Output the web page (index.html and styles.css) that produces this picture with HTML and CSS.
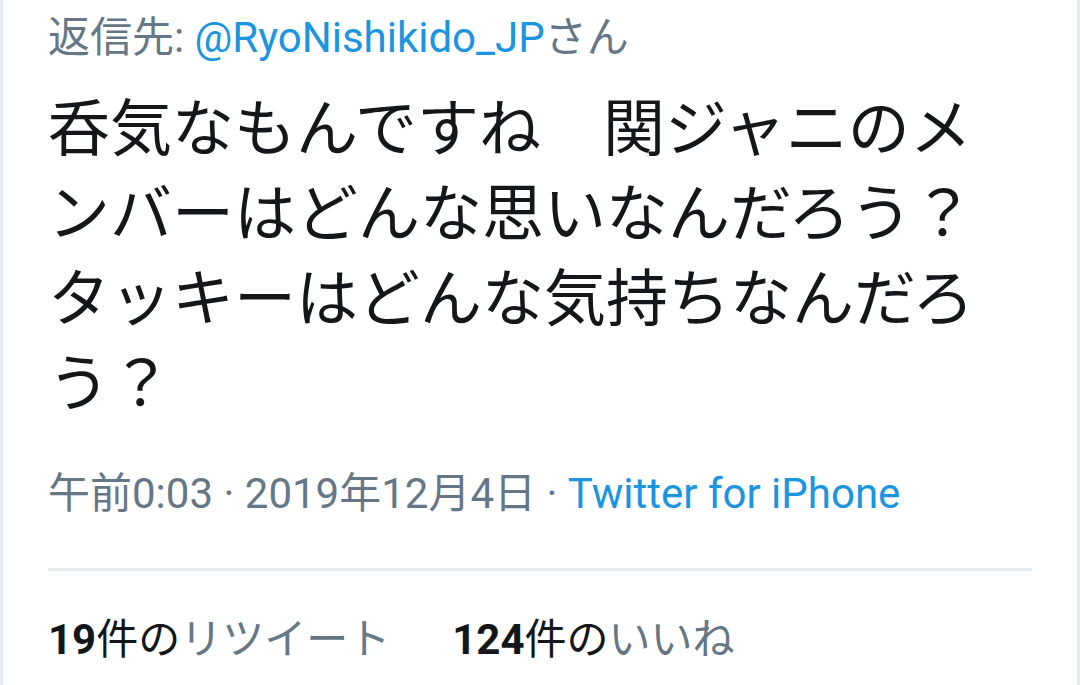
FILE: index.html
```html
<!DOCTYPE html>
<html lang="ja">
<head>
    <meta charset="UTF-8">
    <meta name="viewport" content="width=device-width, initial-scale=1.0">
    <title>ツイート</title>
    <link rel="stylesheet" href="styles.css">
</head>
<body>
    <div class="tweet">
        <!-- 返信先 -->
        <p class="reply-to">返信先: <a href="#" class="link">@RyoNishikido_JP</a>さん</p>

        <!-- 本文 -->
        <p class="tweet-text">呑気なもんですね　関ジャニのメンバーはどんな思いなんだろう？タッキーはどんな気持ちなんだろう？</p>

        <!-- 日時とクライアント -->
        <p class="meta">午前0:03 · 2019年12月4日 · <a href="#" class="link">Twitter for iPhone</a></p>

        <hr class="divider">

        <!-- リツイートといいね -->
        <div class="stats">
            <span class="stat"><strong>19</strong>件の<span class="label">リツイート</span></span>
            <span class="stat"><strong>124</strong>件の<span class="label">いいね</span></span>
        </div>
    </div>
</body>
</html>
```

FILE: styles.css
```css
body {
    margin: 0;
    background-color: #ffffff;
    font-family: Roboto, "Noto Sans CJK JP", sans-serif;
    color: #14171a;
}
.tweet {
    height: 685px;
    box-sizing: border-box;
    border-left: 3px solid #e6ecf0;
    border-right: 3px solid #e6ecf0;
    padding: 0 45px;
}
p {
    margin: 0;
}
.link {
    color: #1b95e0;
    text-decoration: none;
}
.reply-to {
    padding-top: 13px;
    font-size: 42px;
    line-height: 50px;
    color: #657786;
}
.tweet-text {
    margin-top: 24px;
    font-size: 62px;
    line-height: 85px;
}
.meta {
    margin-top: 42px;
    font-size: 42px;
    line-height: 50px;
    color: #657786;
}
.divider {
    margin: 49px 0 0;
    border: none;
    border-top: 3px solid #e6ecf0;
}
.stats {
    display: flex;
    gap: 62px;
    margin-top: 44px;
    font-size: 42px;
    line-height: 50px;
}
.stat strong {
    font-weight: 700;
}
.label {
    color: #657786;
}
```
